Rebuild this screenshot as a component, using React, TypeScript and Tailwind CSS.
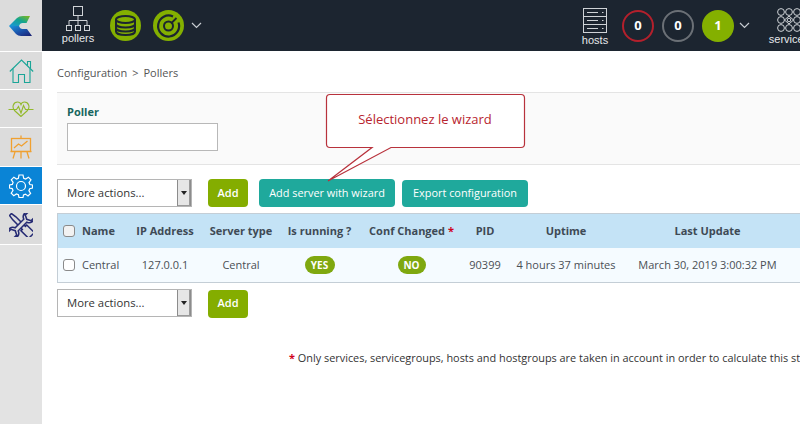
import { ReactNode } from 'react';

const font = { fontFamily: '"Open Sans", sans-serif' };
const headerFont = { fontFamily: '"Liberation Sans", sans-serif' };

function Chevron() {
  return (
    <svg width="11" height="7" viewBox="0 0 11 7" fill="none" stroke="#c8cdd2" strokeWidth="1.2">
      <path d="M1 1 L5.5 5.5 L10 1" />
    </svg>
  );
}

function Logo() {
  return (
    <svg width="24" height="20" viewBox="0 0 24 20">
      <defs>
        <linearGradient id="logoTop" x1="1" y1="0" x2="0" y2="1">
          <stop offset="0" stopColor="#86b816" />
          <stop offset="0.45" stopColor="#14a58f" />
          <stop offset="1" stopColor="#1a96dc" />
        </linearGradient>
        <linearGradient id="logoBottom" x1="0" y1="0" x2="1" y2="1">
          <stop offset="0" stopColor="#1a96dc" />
          <stop offset="0.55" stopColor="#1b4fa8" />
          <stop offset="1" stopColor="#1c1f70" />
        </linearGradient>
      </defs>
      <path d="M0 10 L8 2 Q10 0 14 0 H21 L17.5 7 H13.5 Q11 7 10 10 Z" fill="url(#logoTop)" />
      <path d="M0 10 H10 Q11 13 13.5 13 H18 L23 20 H12 Q9 20 7 18 Z" fill="url(#logoBottom)" />
    </svg>
  );
}

function PollersIcon() {
  return (
    <svg width="26" height="25" viewBox="0 0 26 25" fill="none" stroke="#cfd3d7" strokeWidth="1">
      <rect x="8.5" y="0.5" width="9" height="9" />
      <path d="M13 9.5 V14.5 M4 19 V14.5 H22 V19 M13 14.5 V19" />
      <rect x="1.5" y="19.5" width="5" height="5" />
      <rect x="10.5" y="19.5" width="5" height="5" />
      <rect x="19.5" y="19.5" width="5" height="5" />
    </svg>
  );
}

function DbBadge() {
  return (
    <svg width="31" height="31" viewBox="0 0 31 31">
      <circle cx="15.5" cy="15.5" r="15.5" fill="#84b000" />
      <g fill="none" stroke="#1c2530" strokeWidth="2">
        <ellipse cx="15.5" cy="9.5" rx="9.5" ry="3.5" />
        <path d="M6 9.5 V21.5 C6 23.5 10 25 15.5 25 C21 25 25 23.5 25 21.5 V9.5" />
        <path d="M6 14 C6 16 10 17.5 15.5 17.5 C21 17.5 25 16 25 14" />
        <path d="M6 18 C6 20 10 21.5 15.5 21.5 C21 21.5 25 20 25 18" />
      </g>
    </svg>
  );
}

function GaugeBadge() {
  return (
    <svg width="31" height="31" viewBox="0 0 31 31">
      <circle cx="15.5" cy="15.5" r="15.5" fill="#84b000" />
      <g fill="none" stroke="#1c2530">
        <path d="M20 6.5 A10.5 10.5 0 1 0 25.5 12.5" strokeWidth="2.2" />
        <circle cx="15.5" cy="16" r="4.5" strokeWidth="2" />
        <path d="M18 13.5 L23.5 8" strokeWidth="1.8" />
      </g>
    </svg>
  );
}

function HostsIcon() {
  return (
    <svg width="24" height="25" viewBox="0 0 24 25" fill="none" stroke="#cfd3d7" strokeWidth="1">
      <rect x="0.5" y="0.5" width="23" height="24" />
      <path d="M0.5 8.5 H23.5 M0.5 16.5 H23.5" />
      <path d="M4 4.5 H15 M4 12.5 H15 M4 20.5 H15" />
      <path d="M19 4.5 H20.5 M19 12.5 H20.5 M19 20.5 H20.5" />
    </svg>
  );
}

function ServicesIcon() {
  const cells = [4, 12, 20];
  return (
    <svg width="24" height="24" viewBox="0 0 24 24" fill="none" stroke="#cfd3d7" strokeWidth="1">
      {cells.map((x) => cells.map((y) => <circle key={`${x}-${y}`} cx={x} cy={y} r={x === 12 && y === 12 ? 1.8 : 3.4} />))}
      <path d="M12 8 L16.5 12 L12 16 L7.5 12 Z" />
    </svg>
  );
}

function HomeIcon() {
  return (
    <svg width="25" height="24" viewBox="0 0 25 24" fill="none" stroke="#1aa597" strokeWidth="1.1">
      <path d="M0.8 12.5 L12.5 1 L24.2 12.5" />
      <path d="M18.5 6.5 V2.5 H21.5 V9.5" />
      <path d="M4 9.5 V23.5 H9.5 V15.5 H15.5 V23.5 H21 V9.5" />
    </svg>
  );
}

function HeartIcon() {
  return (
    <svg width="26" height="16" viewBox="0 0 26 16" fill="none" stroke="#93b92c" strokeWidth="1.1">
      <path d="M13 15.5 L6.5 9.5 C3.5 6 5.5 1 9.5 1 C11 1 12.5 2 13 3.5 C13.5 2 15 1 16.5 1 C20.5 1 22.5 6 19.5 9.5 Z" />
      <path d="M0.5 8.5 H8.5 L10.5 5.5 L13 12 L15.5 4.5 L17.5 8.5 H25.5" />
    </svg>
  );
}

function BoardIcon() {
  return (
    <svg width="22" height="24" viewBox="0 0 22 24" fill="none" stroke="#f0a030" strokeWidth="1.3">
      <path d="M11 0.5 V3" />
      <rect x="1.5" y="3.5" width="19" height="13" />
      <path d="M0.5 16.5 H21.5" />
      <path d="M4 13 L8.5 9 L11.5 11 L17.5 6" />
      <path d="M5 17 L3 23.5 M11 17 V23.5 M17 17 L19 23.5" />
    </svg>
  );
}

function GearIcon() {
  return (
    <svg width="24" height="24" viewBox="0 0 24 24" fill="none" stroke="#ffffff" strokeWidth="1.2">
      <circle cx="12" cy="12" r="4.5" />
      <path d="M10 1 H14 L14.7 4.2 L16.7 5 L19.4 3.2 L22 5.9 L20 8.6 L20.9 10.5 L23.5 11 V14 L20.7 14.7 L19.9 16.7 L21.6 19.3 L19 21.9 L16.4 20.1 L14.5 21 L14 23.5 H10 L9.4 20.8 L7.4 20 L4.8 21.7 L2.2 19.1 L4 16.5 L3.2 14.6 L0.5 14 V11 L3.3 10.4 L4.1 8.4 L2.3 5.8 L4.9 3.2 L7.5 5 L9.4 4.2 Z" />
    </svg>
  );
}

function ToolsIcon() {
  return (
    <svg width="24" height="24" viewBox="0 0 24 24" fill="#dcdcdc" stroke="#262b74" strokeWidth="1.15">
      {/* tournevis */}
      <g transform="rotate(-45 12 12) translate(12 12) scale(1.35) translate(-12 -12)">
        <path d="M11 1 H13 L13.6 5 V15 H15 V23 H9 V15 H10.4 V5 Z" />
      </g>
      {/* clé */}
      <g transform="rotate(45 12 12) translate(12 12) scale(1.35) translate(-12 -12)">
        <path d="M10.4 7.5 C7.5 6.5 7 3 9 1 V4.5 L12 6 L15 4.5 V1 C17 3 16.5 6.5 13.6 7.5 V16.5 C16.5 17.5 17 21 15 23 V19.5 L12 18 L9 19.5 V23 C7 21 7.5 17.5 10.4 16.5 Z" />
      </g>
    </svg>
  );
}

function CountBadge({ n, kind }: { n: number; kind: 'red' | 'gray' | 'green' }) {
  const cls =
    kind === 'red'
      ? 'border-2 border-[#b3202c]'
      : kind === 'gray'
        ? 'border-2 border-[#6b7076]'
        : 'bg-[#84b000]';
  return (
    <div className={`flex h-[32px] w-[32px] items-center justify-center rounded-full text-[13px] font-bold text-white ${cls}`} style={font}>
      {n}
    </div>
  );
}

function SideItem({ h, active, children }: { h: string; active?: boolean; children: ReactNode }) {
  return (
    <div className={`flex w-full items-center justify-center border-b border-white ${h} ${active ? 'bg-[#0a84d6]' : 'bg-[#dcdcdc]'}`}>
      {children}
    </div>
  );
}

function ActionsSelect() {
  return (
    <div className="flex h-[28px] w-[135px] items-center justify-between border border-[#b5b5b5] bg-white pl-[9px] text-[11.3px] text-[#333]">
      <span>More actions...</span>
      <div className="flex h-full w-[14px] items-center justify-center border-x border-[#8c8c8c] bg-[#e6e6e6] shadow-[inset_-1px_-1px_0_#9a9a9a]">
        <div className="h-0 w-0 border-x-[3px] border-t-[4px] border-x-transparent border-t-[#222]" />
      </div>
    </div>
  );
}

function AddButton() {
  return (
    <button className="h-[28px] w-[40px] rounded-[4px] bg-[#84ad00] text-[11px] font-semibold text-white">
      Add
    </button>
  );
}

function Checkbox({ header }: { header?: boolean }) {
  return <div className={`h-[12px] w-[12px] rounded-[3px] border border-[#8a8a8a] ${header ? 'bg-[#f2f2f2]' : 'bg-white'}`} />;
}

const columns = [
  { label: 'Name', w: 'w-[45px]', align: 'text-left' },
  { label: 'IP Address', w: 'w-[76px]', align: 'text-center' },
  { label: 'Server type', w: 'w-[76px]', align: 'text-center' },
  { label: 'Is running ?', w: 'w-[81px]', align: 'text-center' },
  { label: 'Conf Changed', w: 'w-[103px]', align: 'text-center', star: true },
  { label: 'PID', w: 'w-[44px]', align: 'text-center' },
  { label: 'Uptime', w: 'w-[118px]', align: 'text-center' },
  { label: 'Last Update', w: 'w-[165px]', align: 'text-center' },
];

export default function App() {
  return (
    <div className="relative flex h-[424px] w-[800px] overflow-hidden bg-white text-[#4a4f55]" style={font}>
      {/* menu de gauche */}
      <aside className="flex w-[42px] shrink-0 flex-col bg-[#e3e3e3]">
        <SideItem h="h-[52px]"><Logo /></SideItem>
        <SideItem h="h-[38px]"><HomeIcon /></SideItem>
        <SideItem h="h-[38px]"><HeartIcon /></SideItem>
        <SideItem h="h-[39px]"><BoardIcon /></SideItem>
        <SideItem h="h-[38px]" active><GearIcon /></SideItem>
        <SideItem h="h-[40px]"><ToolsIcon /></SideItem>
      </aside>

      <div className="flex min-w-0 flex-1 flex-col">
        {/* barre du haut */}
        <header className="flex h-[51px] shrink-0 items-center bg-[#1c2530] text-white" style={headerFont}>
          <div className="ml-[23px] flex w-[26px] flex-col items-center">
            <PollersIcon />
            <span className="text-[11px] leading-[14px] text-[#e6e8ea]">pollers</span>
          </div>
          <div className="ml-[19px]"><DbBadge /></div>
          <div className="ml-[12px]"><GaugeBadge /></div>
          <div className="ml-[7px]"><Chevron /></div>
          <div className="ml-[381px] flex w-[24px] flex-col items-center pt-[3px]">
            <HostsIcon />
            <span className="text-[11px] leading-[14px] text-[#e6e8ea]">hosts</span>
          </div>
          <div className="ml-[15px]"><CountBadge n={0} kind="red" /></div>
          <div className="ml-[8px]"><CountBadge n={0} kind="gray" /></div>
          <div className="ml-[8px]"><CountBadge n={1} kind="green" /></div>
          <div className="ml-[5px]"><Chevron /></div>
          <div className="ml-[19px] flex w-[40px] shrink-0 flex-col items-center pt-[3px]">
            <ServicesIcon />
            <span className="text-[11px] leading-[14px] text-[#e6e8ea]">services</span>
          </div>
        </header>

        <main className="pl-[15px]">
          <div className="flex h-[41px] items-center gap-[5px] pt-[3px] text-[11px] text-[#555]">
            <span>Configuration</span>
            <span>&gt;</span>
            <span>Pollers</span>
          </div>

          {/* filtre */}
          <section className="h-[73px] w-[770px] border-y border-[#e4e4e4] bg-[#fafafa] pl-[10px] pt-[11px]">
            <div className="text-[11px] font-bold leading-[15px] text-[#17665e]">Poller</div>
            <div className="mt-[4px] h-[28px] w-[151px] border border-[#b8b8b8] bg-white" />
          </section>

          <div className="mt-[14px] flex items-center">
            <ActionsSelect />
            <div className="ml-[16px]"><AddButton /></div>
            <button className="ml-[11px] h-[28px] w-[136px] rounded-[4px] bg-[#1fa99c] text-[10.9px] font-medium text-white">
              Add server with wizard
            </button>
            <button className="ml-[7px] h-[27px] w-[126px] rounded-[4px] bg-[#1fa99c] text-[10.9px] font-medium text-white">
              Export configuration
            </button>
          </div>

          {/* tableau */}
          <section className="mt-[6px] w-[770px] border border-[#c4ced6]">
            <div className="flex h-[34px] items-center bg-[#c4e3f6] text-[11px] font-bold text-[#3e4a55]">
              <div className="flex w-[24px] shrink-0 justify-end pr-[7px]"><Checkbox header /></div>
              {columns.map((c) => (
                <div key={c.label} className={`shrink-0 whitespace-nowrap ${c.w} ${c.align}`}>
                  {c.label}
                  {c.star ? <span className="text-[#d0021b]"> *</span> : null}
                </div>
              ))}
            </div>
            <div className="flex h-[34px] items-center bg-[#f5fbff] text-[11px] text-[#4a4f55]">
              <div className="flex w-[24px] shrink-0 justify-end pr-[7px]"><Checkbox /></div>
              <div className="w-[45px] shrink-0">Central</div>
              <div className="w-[76px] shrink-0 text-center">127.0.0.1</div>
              <div className="w-[76px] shrink-0 text-center">Central</div>
              <div className="flex w-[81px] shrink-0 justify-center">
                <span className="flex h-[18px] w-[30px] items-center justify-center rounded-full bg-[#7fa80f] text-[10px] font-bold text-white">YES</span>
              </div>
              <div className="flex w-[103px] shrink-0 justify-center">
                <span className="flex h-[18px] w-[28px] items-center justify-center rounded-full bg-[#7fa80f] text-[10px] font-bold text-white">NO</span>
              </div>
              <div className="w-[44px] shrink-0 text-center">90399</div>
              <div className="w-[118px] shrink-0 whitespace-nowrap text-center">4 hours 37 minutes</div>
              <div className="w-[165px] shrink-0 whitespace-nowrap text-center">March 30, 2019 3:00:32 PM</div>
            </div>
          </section>

          <div className="mt-[6px] flex items-center">
            <ActionsSelect />
            <div className="ml-[16px]"><AddButton /></div>
          </div>

          <p className="ml-[232px] mt-[32px] whitespace-nowrap text-[10.9px] text-[#333]">
            <span className="font-bold text-[#d0021b]">*</span> Only services, servicegroups, hosts and hostgroups are taken in account in order to calculate this status
          </p>
        </main>
      </div>

      {/* bulle d'annotation */}
      <svg className="absolute left-[320px] top-[90px]" width="212" height="96" viewBox="0 0 212 96">
        <path
          d="M10.5 4.5 H201 Q204.5 4.5 204.5 8 V54 Q204.5 57.5 201 57.5 H71 L8 91 L52 57.5 H10 Q6.5 57.5 6.5 54 V8 Q6.5 4.5 10 4.5 Z"
          fill="#ffffff"
          stroke="#b8323c"
          strokeWidth="1.2"
        />
      </svg>
      <div className="absolute left-[326px] top-[94px] flex h-[53px] w-[198px] items-center justify-center pb-[2px] text-[13px] text-[#b8252f]">
        Sélectionnez le wizard
      </div>
    </div>
  );
}
